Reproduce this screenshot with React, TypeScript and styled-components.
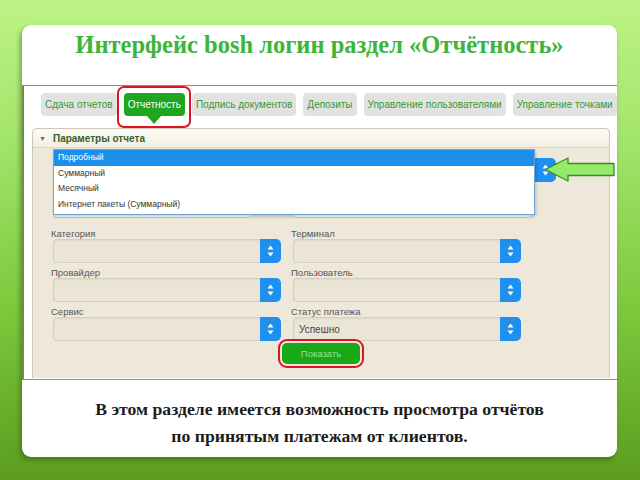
import React from "react";
import styled, { createGlobalStyle } from "styled-components";

const GlobalStyle = createGlobalStyle`
  html, body {
    margin: 0;
    padding: 0;
    width: 640px;
    height: 480px;
    overflow: hidden;
  }
  body {
    background: linear-gradient(180deg, #bdf386 0%, #a2e46a 30%, #7cc83c 65%, #5c9c1e 100%);
    font-family: "Liberation Sans", Arial, sans-serif;
  }
`;

const Page = styled.div`
  width: 640px;
  height: 480px;
  padding: 25px 23px 23px 22px;
  box-sizing: border-box;
`;

const Card = styled.div`
  height: 432px;
  background: #fff;
  border-radius: 9px;
  box-shadow: -2px 3px 5px rgba(40, 70, 10, 0.45);
  display: flex;
  flex-direction: column;
  overflow: hidden;
`;

const Title = styled.h1`
  margin: 0;
  height: 60px;
  padding-top: 6px;
  box-sizing: border-box;
  text-align: center;
  font-family: "Liberation Serif", "Times New Roman", serif;
  font-weight: bold;
  font-size: 24.5px;
  line-height: 28px;
  color: #3db43b;
`;

const Shot = styled.div`
  position: relative;
  height: 295px;
  background: #fff;
  border-top: 1px solid #8d8d8d;
  border-bottom: 1px solid #8d8d8d;
  border-left: 2px solid #6a8f45;
  box-sizing: border-box;
  display: flex;
  flex-direction: column;
`;

const Tabs = styled.div`
  display: flex;
  gap: 7px;
  padding: 7px 0 0 17px;
  height: 42px;
  box-sizing: border-box;
`;

const Tab = styled.div<{ $active?: boolean }>`
  position: relative;
  height: 23px;
  padding: 0 4px;
  display: flex;
  align-items: center;
  border-radius: 4px;
  font-size: 10px;
  white-space: nowrap;
  background: ${(p) => (p.$active ? "#1ea61e" : "#e2e3e0")};
  color: ${(p) => (p.$active ? "#ffffff" : "#369836")};

  ${(p) =>
    p.$active &&
    `
    &::after {
      content: "";
      position: absolute;
      left: 50%;
      bottom: -8px;
      margin-left: -7px;
      border-left: 7px solid transparent;
      border-right: 7px solid transparent;
      border-top: 8px solid #1ea61e;
    }
    &::before {
      content: "";
      position: absolute;
      left: -7px;
      right: -6px;
      top: -7px;
      bottom: -12px;
      border: 2.5px solid #dd1520;
      border-radius: 7px;
    }
  `}
`;

const Panel = styled.div`
  flex: 1;
  margin: 0 7px 1px 8px;
  border: 1px solid #cfc8b8;
  border-bottom: none;
  border-radius: 5px 5px 0 0;
  background: #eee8da;
  display: flex;
  flex-direction: column;
`;

const PanelHead = styled.div`
  height: 18px;
  display: flex;
  align-items: center;
  gap: 7px;
  padding-left: 6px;
  background: linear-gradient(#fbfaf4, #f3efe3);
  border-bottom: 1px solid #ddd6c6;
  border-radius: 5px 5px 0 0;
  font-size: 10px;
  font-weight: bold;
  color: #37612a;
`;

const Caret = styled.span`
  font-size: 7px;
  color: #666;
`;

const PanelBody = styled.div`
  position: relative;
  flex: 1;
  padding: 10px 0 0 20px;
  display: flex;
  flex-direction: column;
`;

const Grid = styled.div`
  display: grid;
  grid-template-columns: 228px 228px;
  column-gap: 12px;
`;

const Field = styled.div`
  display: flex;
  flex-direction: column;
`;

const Label = styled.div`
  height: 10px;
  margin-left: -2px;
  font-size: 9.5px;
  line-height: 10px;
  color: #555;
`;

const Select = styled.div<{ $width?: number }>`
  display: flex;
  height: 24px;
  margin-bottom: 5px;
  width: ${(p) => (p.$width ? `${p.$width}px` : "auto")};
`;

const SelectBox = styled.div`
  flex: 1;
  border: 1px solid #d6cfbf;
  border-right: none;
  border-radius: 4px 0 0 4px;
  background: #ebe5d6;
  box-shadow: inset 0 1px 2px rgba(0, 0, 0, 0.06);
  display: flex;
  align-items: center;
  padding-left: 5px;
  font-size: 10px;
  color: #444;
`;

const SelectBtn = styled.div`
  width: 21px;
  background: #1f8ff0;
  border-radius: 0 5px 5px 0;
  display: flex;
  align-items: center;
  justify-content: center;
`;

const WhiteInput = styled.div<{ $width: number }>`
  width: ${(p) => p.$width}px;
  height: 23px;
  background: #fff;
  border: 1px solid #d6cfbf;
  border-radius: 4px;
  box-sizing: border-box;
`;

const DateRow = styled.div`
  display: flex;
  gap: 39px;
  margin: 8px 0 11px;
`;

const Rows = styled.div`
  display: flex;
  flex-direction: column;
`;

const Dropdown = styled.div`
  position: absolute;
  left: 20px;
  top: 1px;
  width: 480px;
  background: #fff;
  border: 1px solid #6fa8d8;
  box-shadow: 1px 2px 3px rgba(0, 0, 0, 0.2);
  padding-bottom: 2px;
`;

const Option = styled.div<{ $selected?: boolean }>`
  height: 15.5px;
  line-height: 15.5px;
  padding-left: 4px;
  font-size: 8.5px;
  color: ${(p) => (p.$selected ? "#fff" : "#333")};
  background: ${(p) => (p.$selected ? "#1e8fe8" : "transparent")};
`;

const ButtonRow = styled.div`
  display: flex;
  justify-content: center;
  padding-right: 20px;
  margin-top: -3px;
`;

const ShowButton = styled.button`
  width: 78px;
  height: 21px;
  border: none;
  border-radius: 5px;
  background: #19a819;
  color: #97e397;
  font-family: "Liberation Sans", Arial, sans-serif;
  font-size: 9.5px;
  outline: 2.5px solid #dd1520;
  outline-offset: 2px;
`;

const Pointer = styled.svg`
  position: absolute;
  left: 520px;
  top: 70px;
`;

const Caption = styled.div`
  flex: 1;
  padding-top: 16px;
  text-align: center;
  font-family: "Liberation Serif", "Times New Roman", serif;
  font-weight: bold;
  font-size: 17.7px;
  line-height: 27px;
  color: #1c1c1c;
`;

const Arrows = () => (
  <svg width="7" height="12" viewBox="0 0 7 12">
    <path d="M3.5 0.5 L6.5 4.5 L0.5 4.5 Z" fill="#fff" />
    <path d="M3.5 11.5 L6.5 7.5 L0.5 7.5 Z" fill="#fff" />
  </svg>
);

const SelectField = ({ value = "", width }: { value?: string; width?: number }) => (
  <Select $width={width}>
    <SelectBox>{value}</SelectBox>
    <SelectBtn>
      <Arrows />
    </SelectBtn>
  </Select>
);

const tabs = [
  "Сдача отчетов",
  "Отчетность",
  "Подпись документов",
  "Депозиты",
  "Управление пользователями",
  "Управление точками",
];

const rows = [
  ["Категория", "Терминал", ""],
  ["Провайдер", "Пользователь", ""],
  ["Сервис", "Статус платежа", "Успешно"],
];

const options = ["Подробный", "Суммарный", "Месячный", "Интернет пакеты (Суммарный)"];

export default function App() {
  return (
    <>
      <GlobalStyle />
      <Page>
        <Card>
          <Title>Интерфейс bosh логин раздел «Отчётность»</Title>
          <Shot>
            <Tabs>
              {tabs.map((t) => (
                <Tab key={t} $active={t === "Отчетность"}>
                  {t}
                </Tab>
              ))}
            </Tabs>
            <Panel>
              <PanelHead>
                <Caret>▼</Caret>
                Параметры отчета
              </PanelHead>
              <PanelBody>
                <SelectField width={503} />
                <DateRow>
                  <WhiteInput $width={200} />
                  <WhiteInput $width={241} />
                </DateRow>
                <Rows>
                  {rows.map(([l, r, v]) => (
                    <Grid key={l}>
                      <Field>
                        <Label>{l}</Label>
                        <SelectField />
                      </Field>
                      <Field>
                        <Label>{r}</Label>
                        <SelectField value={v} />
                      </Field>
                    </Grid>
                  ))}
                </Rows>
                <ButtonRow>
                  <ShowButton>Показать</ShowButton>
                </ButtonRow>
                <Dropdown>
                  {options.map((o, i) => (
                    <Option key={o} $selected={i === 0}>
                      {o}
                    </Option>
                  ))}
                </Dropdown>
              </PanelBody>
            </Panel>
            <Pointer width="72" height="28" viewBox="0 0 72 28">
              <path
                d="M1.5 13.5 L24 2 L24 7.5 L70 7.5 L70 19.5 L24 19.5 L24 25 Z"
                fill="#95ea6a"
                stroke="#3d8a24"
                strokeWidth="1.3"
                strokeLinejoin="round"
              />
            </Pointer>
          </Shot>
          <Caption>
            В этом разделе имеется возможность просмотра отчётов
            <br />
            по принятым платежам от клиентов.
          </Caption>
        </Card>
      </Page>
    </>
  );
}
